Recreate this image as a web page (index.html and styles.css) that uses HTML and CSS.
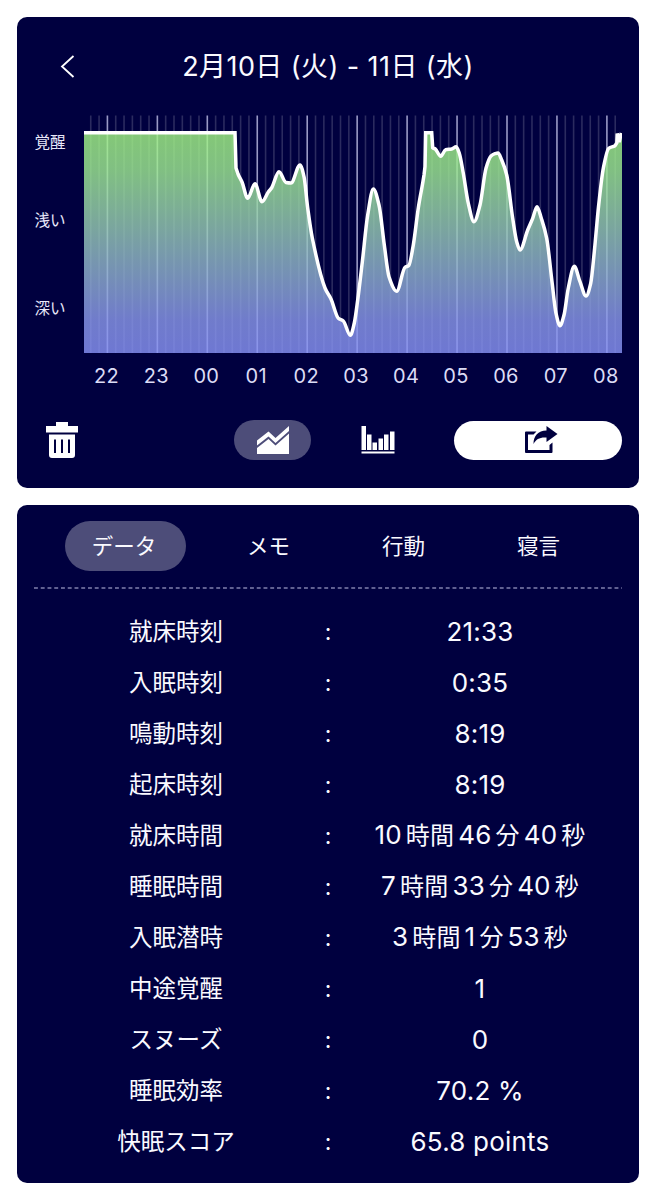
FILE: index.html
```html
<!DOCTYPE html>
<html lang="ja">
<head>
    <meta charset="UTF-8">
    <meta name="viewport" content="width=device-width, initial-scale=1.0">
    <title>睡眠データ</title>
    <link rel="stylesheet" href="styles.css">
</head>
<body>
    <section class="card chart-card">
        <header class="card-header">
            <svg class="back" width="16" height="24" viewBox="0 0 16 24"><path d="M13.500 2L2 12.500L13.500 23"/></svg>
            <h1>2月10日 (火) - 11日 (水)</h1>
        </header>

        <div class="chart">
            <div class="levels">
                <span>覚醒</span>
                <span>浅い</span>
                <span>深い</span>
            </div>
            <svg class="plot" width="538" height="238" viewBox="84 115 538 238">
                <defs>
                    <linearGradient id="sleepFill" gradientUnits="userSpaceOnUse" x1="0" y1="132" x2="0" y2="353">
                        <stop offset="0" stop-color="#a1f484"/>
                        <stop offset="0.18" stop-color="#9de992"/>
                        <stop offset="0.85" stop-color="#8997ea"/>
                        <stop offset="1" stop-color="#8792f3"/>
                    </linearGradient>
                </defs>
                <g id="grid"></g>
                <path id="area" class="area"/>
                <path id="line" class="line"/>
            </svg>
        </div>
        <div class="hours">
            <span>22</span><span>23</span><span>00</span><span>01</span><span>02</span><span>03</span><span>04</span><span>05</span><span>06</span><span>07</span><span>08</span>
        </div>

        <div class="toolbar">
            <button class="trash" aria-label="削除">
                <svg width="32" height="36" viewBox="0 0 32 36">
                    <path fill-rule="evenodd" d="M10 0H22V4H32V10.500H0V4H10ZM3 12.500H29V33Q29 36 26 36H6Q3 36 3 33ZM8 17.500V31H10V17.500ZM15 17.500V31H17V17.500ZM22 17.500V31H24V17.500Z"/>
                </svg>
            </button>
            <button class="view active" aria-label="折れ線">
                <svg width="32" height="28" viewBox="0 0 32 28">
                    <path d="M0 14.500L11.500 5.500L18.500 12L32 0V5L18.500 17L11.500 10.500L0 19.500Z"/>
                    <path d="M0 22L11.500 13L18.500 19.500L32 7.500V28H0Z"/>
                </svg>
            </button>
            <button class="view" aria-label="棒グラフ">
                <svg width="34" height="28" viewBox="0 0 34 28">
                    <path d="M0.500 0H5V24H0.500ZM6 8.500H10.500V24H6ZM11.500 16.500H16V24H11.500ZM17.500 12.500H22V24H17.500ZM23 8.500H27.500V24H23ZM29 5.500H33.500V24H29ZM0.500 25.500H33.500V27.500H0.500Z"/>
                </svg>
            </button>
            <button class="share" aria-label="共有">
                <svg width="34" height="28" viewBox="0 0 34 28">
                    <path d="M12.500 5.500H2Q1 5.500 1 6.500V26Q1 27 2 27H27.500Q28.500 27 28.500 26V16.500L25.500 19V24H4V8.500H9.500Z"/>
                    <path d="M22.500 0L33.500 8L22.500 16V11.500C16 11 12 13 9.500 18C9.500 10 14 4.500 22.500 4.500Z"/>
                </svg>
            </button>
        </div>
    </section>

    <section class="card data-card">
        <nav class="tabs">
            <a class="tab selected">データ</a>
            <a class="tab">メモ</a>
            <a class="tab">行動</a>
            <a class="tab">寝言</a>
        </nav>
        <svg class="divider" width="588" height="2" viewBox="0 0 588 2"><path d="M0 1H588"/></svg>

        <dl class="rows">
            <div class="row"><dt>就床時刻</dt><i>:</i><dd>21:33</dd></div>
            <div class="row"><dt>入眠時刻</dt><i>:</i><dd>0:35</dd></div>
            <div class="row"><dt>鳴動時刻</dt><i>:</i><dd>8:19</dd></div>
            <div class="row"><dt>起床時刻</dt><i>:</i><dd>8:19</dd></div>
            <div class="row"><dt>就床時間</dt><i>:</i><dd>10<b>時間</b>46<b>分</b>40<b>秒</b></dd></div>
            <div class="row"><dt>睡眠時間</dt><i>:</i><dd>7<b>時間</b>33<b>分</b>40<b>秒</b></dd></div>
            <div class="row"><dt>入眠潜時</dt><i>:</i><dd>3<b>時間</b>1<b>分</b>53<b>秒</b></dd></div>
            <div class="row"><dt>中途覚醒</dt><i>:</i><dd>1</dd></div>
            <div class="row"><dt>スヌーズ</dt><i>:</i><dd>0</dd></div>
            <div class="row"><dt>睡眠効率</dt><i>:</i><dd>70.2 %</dd></div>
            <div class="row"><dt>快眠スコア</dt><i>:</i><dd>65.8 points</dd></div>
        </dl>
    </section>

    <script src="chart.js"></script>
</body>
</html>
```

FILE: styles.css
```css
* {
    margin: 0;
    padding: 0;
    box-sizing: border-box;
}

body {
    padding: 16.5px 17px;
    background: #fff;
    color: #fafaff;
    font-family: 'Inter', 'Noto Sans CJK JP', sans-serif;
}

.card {
    width: 622px;
    background: #00003f;
    border-radius: 10px;
}

.chart-card {
    height: 471px;
    margin-bottom: 17px;
}

.data-card {
    height: 678.5px;
    padding-top: 16.5px;
}

/* Header */
.card-header {
    display: grid;
    grid-template-columns: 100px 1fr 100px;
    align-items: center;
    height: 98.5px;
}

.back {
    margin-left: 43px;
    fill: none;
    stroke: #fff;
    stroke-width: 1.8;
}

h1 {
    padding-top: 3px;
    font-size: 27px;
    font-weight: 400;
    line-height: 36px;
    letter-spacing: 0.42px;
    text-align: center;
    white-space: nowrap;
}

/* Chart */
.chart {
    display: flex;
    height: 238px;
}

.levels {
    display: flex;
    flex-direction: column;
    width: 67px;
    padding: 18px 0 0 17.5px;
    color: #e8e8fa;
    font-size: 15.5px;
    line-height: 20px;
}

.levels span:nth-child(2) {
    margin-top: 58px;
}

.levels span:nth-child(3) {
    margin-top: 68px;
}

.minor {
    stroke: #fff;
    stroke-opacity: 0.17;
    stroke-width: 1.6;
}

.major {
    stroke: #dcdcff;
    stroke-opacity: 0.7;
    stroke-width: 1.6;
}

.area {
    fill: url(#sleepFill);
    fill-opacity: 0.82;
}

.line {
    fill: none;
    stroke: #fff;
    stroke-width: 3.5;
    stroke-linejoin: miter;
}

.hours {
    display: grid;
    grid-template-columns: repeat(11, 49.95px);
    margin-left: 64.5px;
    padding-top: 10px;
    color: #dcdcf5;
    font-size: 20px;
    line-height: 26px;
    letter-spacing: 0.3px;
    text-align: center;
}

/* Toolbar */
.toolbar {
    display: flex;
    align-items: center;
    height: 40px;
    margin-top: 31px;
    padding: 0 17px 0 29px;
}

button {
    display: flex;
    align-items: center;
    justify-content: center;
    height: 40px;
    border: none;
    background: none;
    fill: #fff;
}

.trash {
    width: 32px;
    margin-right: 156px;
}

.view {
    width: 77px;
    margin-right: 28.5px;
    border-radius: 20px;
}

.view.active {
    background: #4d4d79;
}

.share {
    width: 168px;
    height: 39px;
    margin-left: 9px;
    padding-left: 6px;
    border-radius: 20px;
    background: #fff;
    fill: #00003f;
}

/* Tabs */
.tabs {
    display: flex;
    gap: 14px;
    padding-left: 48px;
}

.tab {
    width: 121px;
    height: 50px;
    border-radius: 25px;
    font-size: 21.5px;
    line-height: 50px;
    text-align: center;
}

.tab.selected {
    margin-right: 8px;
    padding-right: 3px;
    background: #4d4d79;
}

.divider {
    display: block;
    margin: 16px 0 0 17px;
    stroke: #8080ad;
    stroke-width: 1.3;
    stroke-dasharray: 3.9 2.85;
}

/* Data rows */
.rows {
    padding-top: 17px;
}

.row {
    display: grid;
    grid-template-columns: 240px 64px 240px;
    justify-content: center;
    align-items: center;
    height: 51px;
    line-height: 50px;
    text-align: center;
    white-space: nowrap;
}

dt {
    font-size: 23.5px;
}

.row i {
    font-size: 23px;
    font-style: normal;
}

dd {
    font-size: 26px;
    letter-spacing: 0.2px;
}

dd b {
    margin: 0 4px;
    font-size: 24px;
    font-weight: 400;
}

dd b:last-child {
    margin-right: 0;
}
```

FILE: chart.js
```js
const points = [
    [84, 132.7], [235, 132.7], [236, 168], [238, 174], [242, 182], [247.7, 198.3], [255, 183.7],
    [262, 201.7], [268.3, 192], [271.7, 187.7], [279, 171.7], [286, 182.5], [291, 183],
    [300, 165], [304, 176.7], [307.7, 208], [312.3, 238], [325, 288], [331, 299],
    [338.3, 318.3], [343.3, 321], [350.3, 335.3], [354.3, 323], [357.7, 300], [362.3, 262],
    [367.7, 215], [373.3, 189], [379, 205], [384.3, 245], [389, 276.7], [396.7, 291.3],
    [405, 267.3], [408.7, 265.7], [413.3, 245], [418.3, 208], [424, 175], [425, 166.7],
    [425.7, 132.7], [431.7, 132.7], [432.7, 147.7], [435.3, 149], [440.7, 156.3],
    [445.7, 149.7], [451.7, 149], [456.2, 146.7], [459.3, 153.3], [463.3, 173.3],
    [468.3, 203.3], [474, 221.7], [480, 205], [486, 168.3], [491, 156], [495, 153.7],
    [498, 153], [501.7, 160], [506.7, 175], [512.7, 218.3], [516.7, 241.7], [520, 250],
    [527.7, 230], [532.7, 218.3], [537, 206.7], [541.3, 218.3], [546.7, 238.3],
    [552, 281.7], [556, 313.3], [560, 325.7], [564, 315], [568.3, 288], [574.3, 266.3],
    [580, 281.7], [586, 296], [590.7, 283.3], [594.3, 251.7], [598.7, 205], [603.3, 168.3],
    [608.7, 148.3], [615, 145.7], [616.8, 143], [617.2, 133.5], [619.2, 142], [621.3, 133]
];

// Monotone cubic curve, so peaks and valleys never overshoot
function smoothPath(p) {
    const n = p.length;
    const d = [];
    for (let i = 0; i < n - 1; i++) {
        d.push((p[i + 1][1] - p[i][1]) / (p[i + 1][0] - p[i][0]));
    }
    const m = p.map((_, i) => {
        if (i === 0) return d[0];
        if (i === n - 1) return d[n - 2];
        return d[i - 1] * d[i] <= 0 ? 0 : 2 * d[i - 1] * d[i] / (d[i - 1] + d[i]);
    });
    let path = `M${p[0][0]} ${p[0][1]}`;
    for (let i = 0; i < n - 1; i++) {
        const [x0, y0] = p[i];
        const [x1, y1] = p[i + 1];
        const h = (x1 - x0) / 3;
        path += h < 0.75
            ? `L${x1} ${y1}`
            : `C${x0 + h} ${y0 + m[i] * h} ${x1 - h} ${y1 - m[i + 1] * h} ${x1} ${y1}`;
    }
    return path;
}

const curve = smoothPath(points);
document.getElementById('line').setAttribute('d', curve);
document.getElementById('area').setAttribute('d', curve + 'L622 133V353H84Z');

// One line every 10 minutes, brighter on the hour
let lines = '';
for (let i = -2; i <= 61; i++) {
    const x = 107.4 + i * 8.325;
    lines += `<path class="${i % 6 === 0 ? 'major' : 'minor'}" d="M${x} 115.500V353"/>`;
}
document.getElementById('grid').innerHTML = lines;
```
